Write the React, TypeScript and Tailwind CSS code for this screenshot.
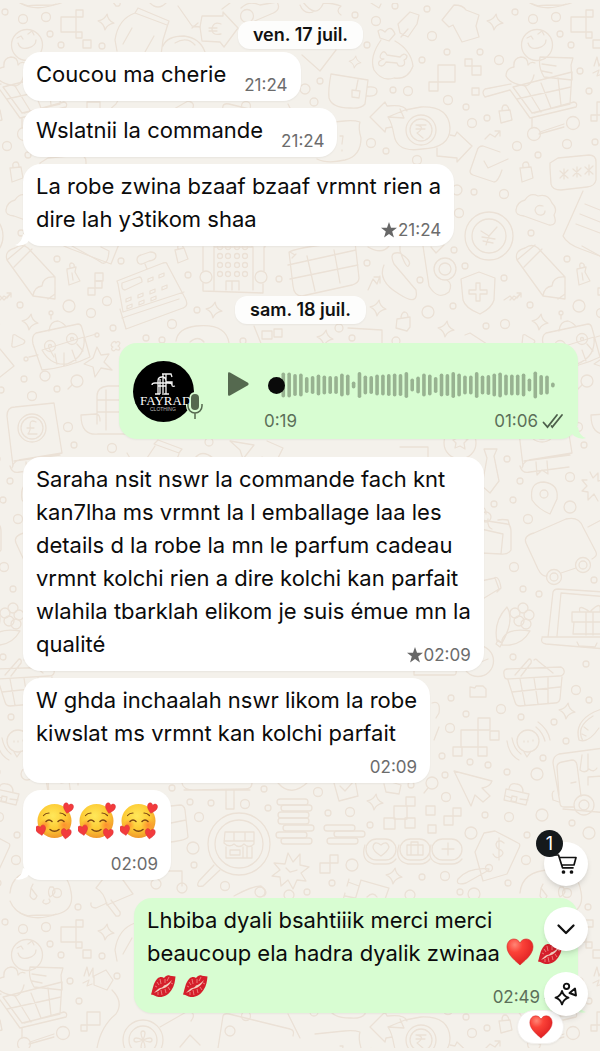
import type { ReactNode } from "react"

type Point = [number, number, number]

// x, y, radius
const dots: Point[] = [
  [5, 12, 3], [23, 19, 4.5], [46, 17, 4.5], [50, 34, 3], [61, 45, 3], [102, 46, 3], [7, 146, 4.5], [28, 155, 3],
  [57, 144, 4.5], [85, 142, 3], [70, 71, 3], [79, 91, 3], [117, 66, 3], [21, 233, 3],
  [355, 15, 3], [376, 21, 4.5], [395, 6, 3], [427, 9, 3], [432, 36, 4.5], [367, 45, 3], [422, 60, 3], [447, 52, 3],
  [480, 52, 3], [499, 60, 4.5], [320, 81, 3], [305, 89, 5], [314, 102, 4], [393, 90, 3], [408, 91, 4.5],
  [448, 100, 4.5], [466, 107, 3], [472, 123, 4.5], [487, 118, 3], [371, 143, 4.5], [386, 151, 3], [417, 160, 4.5],
  [457, 190, 5], [474, 192, 3], [504, 194, 4.5], [459, 213, 4.5], [454, 250, 3], [246, 106, 4.5],
  [57, 259, 3], [121, 261, 3], [188, 275, 3], [279, 279, 3], [69, 306, 6], [91, 313, 4.5], [107, 301, 4.5],
  [20, 305, 3], [197, 310, 3], [172, 324, 4.5], [113, 328, 3], [146, 338, 3], [162, 340, 3], [243, 341, 3],
  [24, 379, 3], [57, 389, 3], [32, 396, 4.5], [1, 390, 3], [68, 427, 4.5], [74, 445, 3], [112, 448, 4.5],
  [209, 442, 4], [45, 376, 5], [367, 263, 3], [420, 280, 3], [465, 266, 3], [504, 278, 3], [453, 306, 3],
  [428, 312, 6], [486, 326, 3], [505, 324, 4.5], [352, 338, 3], [339, 328, 4], [396, 341, 4],
  [507, 459, 3], [10, 481, 3], [3, 500, 3], [60, 507, 6], [18, 519, 4.5], [494, 504, 3], [4, 567, 4.5],
  [13, 589, 3], [29, 594, 3], [60, 477, 4.5], [84, 580, 3], [76, 664, 3], [3, 657, 3], [66, 690, 4.5],
  [79, 700, 3], [44, 722, 3], [56, 741, 3], [11, 717, 3], [501, 709, 4.5], [466, 714, 3], [451, 698, 3],
  [450, 728, 4.5], [442, 756, 3], [470, 762, 3], [488, 765, 3], [507, 772, 3], [33, 758, 3], [27, 774, 6],
  [446, 797, 4.5], [445, 775, 3], [485, 815, 3], [509, 817, 4.5], [32, 815, 6], [62, 823, 3], [79, 833, 6],
  [471, 833, 6], [411, 785, 3], [264, 789, 3], [318, 792, 4.5], [190, 802, 3], [211, 803, 3], [245, 804, 4.5],
  [268, 808, 3], [199, 817, 4.5], [193, 848, 6], [194, 865, 3], [225, 886, 4.5], [182, 888, 5], [172, 788, 3],
  [328, 813, 3], [350, 812, 4.5], [370, 825, 3], [352, 865, 6], [332, 883, 3], [422, 877, 3], [445, 876, 4.5],
  [460, 892, 3], [307, 892, 3], [17, 835, 3], [16, 860, 4.5], [78, 907, 3], [156, 884, 5], [508, 883, 3],
  [474, 894, 6], [289, 895, 5], [410, 895, 5], [57, 893, 4.5],
]

const sparkles: Point[] = [
  [106, 22, 8], [495, 22, 8], [355, 62, 6], [30, 322, 8], [214, 310, 8], [378, 308, 8], [446, 329, 8],
  [325, 338, 8], [57, 711, 8], [375, 802, 8], [394, 876, 8],
]

// x, y, size
const squares: Point[] = [
  [76, 10, 7], [61, 17, 15], [76, 32, 6], [83, 40, 8], [438, 65, 17], [429, 82, 9], [465, 59, 7], [472, 66, 9],
  [472, 88, 7], [95, 273, 8], [95, 281, 7], [88, 288, 7], [87, 102, 13], [81, 115, 6],
  [461, 730, 17], [478, 718, 12], [490, 731, 9], [453, 747, 9], [478, 747, 9], [406, 797, 9], [394, 806, 13],
  [384, 818, 11], [405, 818, 10], [426, 806, 9], [453, 808, 8], [444, 816, 9], [428, 825, 8],
  [330, 855, 8], [320, 863, 10],
]

function Doodles() {
  return (
    <g id="doodles" fill="none" stroke="#ebe1d6" strokeWidth="1.3" strokeLinecap="round" strokeLinejoin="round">
      {dots.map(([x, y, r], i) => (
        <circle key={i} cx={x} cy={y} r={r} />
      ))}
      {sparkles.map(([x, y, r], i) => (
        <path
          key={i}
          transform={`translate(${x} ${y}) rotate(8) scale(${r / 8})`}
          d="M0-8Q1.500-2 8 0Q2 1.500 0 8Q-1.500 2-8 0Q-2-1.500 0-8Z"
        />
      ))}
      {squares.map(([x, y, s], i) => (
        <rect key={i} x={x} y={y} width={s} height={s} />
      ))}

      {/* smiley, heart and note riding in the trolley */}
      <circle cx="27" cy="45" r="15.500" />
      <path d="M18 43q2 7 10 5t8-8M17 38l4-2 2 3M28 34l4-3 2 4M24 75q-2 9-8 11-16-2-20-10 0-8 8-9-1-9 7-10 7 0 7 8q3-4 7-2M30 57l33 1-2 7 1 15-28-3q-6-10-4-20zM32 64l14 2M32 71l10 2" />
      <path d="M3 87l59-15-2 32-38 9zM7 99l54-12M15 86l16 26M31 83l10 25M48 78l3 27M0 90l20 28 46-11q2-4-2-5L24 113M0 90l-25 7q-4-5 0-8l26-5M22 118v10M30 132l24-8M29 134l25-7" />
      <circle cx="24" cy="134" r="6.500" />
      <circle cx="63" cy="123" r="6.500" />
      <path d="M20 3q16 9 36 1M150 3q8 8 16 0M230 3l-8 6M178 6l14 20 8 1M192 28l6-5" />
      <path d="M117 51l-2-11q3-21 20-27l3-5 31 13-2 6-4 13-2 15M135 13l32 12M132 28l-9 16M154 36l-9 16M163 46q4-10 21-10 16 2 21 16M175 43q12-7 20 2" />
      <path d="M202 16l21 0 0-4 15 16-14 19-4-5-18-1-2-14zM221 24q-8-3-9 5 0 7 9 5M209 28h8M209 31h8" />
      <circle cx="247" cy="16" r="6.500" />
      <path d="M241 8q8-8 19-3l17-3q5 8-6 12l-21 9" />
      <path d="M300 5q4 10 13 7M303 2q13 17 20 2M323 3q10 0 18 3-6 5 0 9M371 3l8 5 2-4M410 12l9 3-2 9-9 13-8-4-2-9zM408 29l-7 8" />
      <path d="M378 31q3-3 7 1 6-8 10 2l-6 7-9-3zM381 40q-12 17-7 30 8 12 20 8 14 2 19-12-2-16-18-25" />
      <path d="M384 59q-6 0-3-5 3-5 6 1l13 2q4-5 7-1 0 3-3 4 2 5-2 6-4 1-5-3l-11-1q-3 6-7 3-2-4 5-6z" />
      <path d="M442 20l12-15q9 0 12 5l13 5-3 11 3 11-17 5-9-17-4 2z" />
      <path d="M331 74l37 6-3 24q-4 5-15 4-18 0-21-10-1-8 2-24zM368 87q9-1 9 4 0 6-10 5M358 80l-2 10M352 90l8 1-1 7-7-1zM302 55l18 16 16-21" />
      <path d="M370 117l15-15 2 4q18-2 20 5M370 117l15 15 1-4 6-1M388 117l16 1 -4-9M388 117q4 6 6 18 3 18 28 14 28-1 28-21-1-22-29-21l-16 3-17 7" />
      <circle cx="421" cy="130" r="15" />
      <circle cx="421" cy="130" r="11" />
      <path d="M416 125h10M416 129h9M417 125q9 2 0 8l6 5M437 148v8l20 2v4l15-16-15-14-2 4-5-1M485 139l5-5 5 3 5-6M495 131h5v5" />
      <path d="M499 111l11-1 2 10-11 3zM502 110q0-5 3-5t4 5M520 168l11-1 2 11-11 4zM523 167q-1-5 3-5 3 0 3 5" />
      <path d="M500 152l-17-6q-5 0-6 5l-7 20q0 3 3 4l21 7q4 0 8-12M484 161l4 7 20-9M315 124l29-3q10-1 16 1-2 6 1 16 0 18-16 22-18 4-28-1M340 136l3 0-1 8M342 150v1" />
      <path d="M40 168l0-5 8-5 31-3q7 0 7 7l0 18q-1 6-9 7l-26 3q-9 0-10-6zM50 171l8 7M58 170l-8 8M54 169v10M63 169l8 7M71 168l-8 8M67 167v10M75 167l8 7M83 166l-8 8M79 165v10" />
      <path d="M6 210q1-8 9-10 5-8 13-4 10-3 14 7 6 6 2 12 4 11-5 10l-25-9q-9-1-8-6zM33 206q-7-2-8 4 1 6 7 5 3-1 3-4" />
      <circle cx="489" cy="236" r="24" />
      <circle cx="489" cy="236" r="17" />
      <path d="M481 231l8 5 8-9M489 236l-3 9M482 237l13 2M483 241l10 2" />
      <path d="M73 191l-20 45q4 8 18 13l40 15 20-50M75 204l30 12M70 214l30 12M66 224l32 12" />

      {/* pencil */}
      <path d="M7 260q-3-9 8-12 7-5 13 0l27 29 0 22-22-3zM14 267l18-18M7 260l18-15M33 296q1-9 9-10 1-10 13-9M48 299l7-5" />
      <path d="M67 269l9-2-1 5 5 9-11 4-2-14zM70 267q-1-4 2-4 3 1 2 4M72 273l1 7M0 300l4-4 3 2 4-5M7 293h4v4" />
      <path d="M72 246l18 10q8 4 12 7 6 2 7-12l-8-4M175 250l9-2 4 11-10 4zM178 249q-1-4 2-5 3 0 3 3" />
      <path d="M118 284l-1-3 46-18q4-1 4 1l17 32q6 10-1 12l-57 21-6-20M118 284l5 28 61-20M122 318l57-19M122 283l17-6q3 0 3 5l-17 8q-4 0-3-7zM137 260q0-4 4-5l9-3q6 0 6 4 0 4-7 5l-7 3q-4 1-5-4M145 264l2 5" />
      <path d="M126 299l5-2v3l-5 2zM138 295l5-2v3l-5 2zM150 291l5-2v3l-5 2zM148 279l5-2v3l-5 2zM159 275l5-2v3l-5 2zM127 306l5-2v3l-5 2zM139 302l5-2v3l-5 2zM151 298l5-2v3l-5 2zM162 287l5-2v3l-5 2z" />
      <circle cx="206" cy="277" r="6" />
      <circle cx="261" cy="277" r="6" />
      <path d="M202 242h12v5h38v-5h13v5M203 247v24M203 283v8l60 2v-9M214 247v43M253 247v43M264 247v24M226 290v-9h13v9M232 281v9" />
      {[220, 228, 237, 245].map((x) => (
        <g key={x}>
          <circle cx={x} cy="247" r="2.500" />
          <circle cx={x} cy="256" r="2.500" />
          <circle cx={x} cy="265" r="2.500" />
          <circle cx={x} cy="274" r="2.500" />
        </g>
      ))}
      <path d="M289 252q12-6 66-10l4 36q0 5-7 7l-50 11q-8 0-9-10zM288 265l68-15M290 279l68-14M307 256l8 35M334 250l6 33M295 255l-5-3M292 258l4-4" />
      <path d="M368 247q14 8 21-1M384 265q-7 16 15 29 20 13 17-4l-22-26q-6-13 6-11 12 8 9 12-2 6-9-14v-8M423 246l6 40q9 15 20 6 4-8-2-12M431 247l5 6 8-8" />
      <circle cx="445" cy="269" r="11" />
      <circle cx="445" cy="269" r="6" />
      <path d="M368 290l5-11 4 5 3-8M374 277h6v6M461 279l18-7 16 6-1 22q-2 8-14 14-15-6-17-14zM476 283h4v7h7v4h-7v7h-4v-7h-7v-4h7zM504 300l6-4 4 4 6-6M397 319l13-2 0 10-3 4-11-3zM401 317q1-5 4-5 3 1 3 5" />

      {/* robot */}
      <path d="M36 333l42-9q3 0 4 4l8 29q-20 10-48 13l-9-26q-2-8 3-11zM49 331q1-10 9-10 6 2 8 6M51 319v-4M86 337l10-3M29 357l9-2M42 350l42-13q2 20-17 27-16 2-25-14zM49 348l5 9M55 354l2 10M64 353v13M72 350l4 11M77 344l6 7" />
      <circle cx="51" cy="313" r="2" />
      <circle cx="97" cy="335" r="2" />
      <circle cx="26" cy="359" r="2" />
      <circle cx="50" cy="346" r="5.500" />
      <circle cx="50" cy="346" r="1.500" />
      <circle cx="72" cy="339" r="5.500" />
      <circle cx="72" cy="339" r="1.500" />
      <path d="M97 347l4 8 8-1-5 8 8 8-11-2-6 9-2-10-9-3 9-6zM13 335q2-1 4 1l7 4q2 2-1 4l-8 3q-4 1-3-3zM112 343q3-3 4 0 2-3 4 0-1 3-2 3 3 2 1 4-3 0-3-1-2 3-4 1-1-2 1-3-3-1-1-4zM0 349l14 17-14 11" />
      <circle cx="77" cy="381" r="6" />
      <path d="M72 385l-4 4M98 434q-17 2-17-19l15-1q4 0 4 7M97 396q0-9 11-10h20M97 396v28M106 390v40M98 434h30M97 400h22M97 412h22M176 341q2-13 20-15 30-3 33 17M190 342q8-7 14 0M254 326l8 20 120 0v-16l-34-2M262 331h10v8h-10zM274 329h8v8h-8z" />
      <path d="M7 416q0-9 8-9l39-4 8 50-43 7q-6 2-7 8M7 416l6 50M14 461l46-6" />
      <circle cx="32" cy="428" r="14" />
      <circle cx="32" cy="428" r="11" />
      <path d="M36 422q-6-3-6 3 1 5-2 9h9M27 428h7" />
      <path d="M158 440l24 9-3 4-25-9zM155 446l-8 12M179 454l-5 12M230 441l24 4-11 14-3-9zM127 453l4 7M267 441l16 7-7 14-14-5M195 458q7-9 18 0M465 335l5-2 20 13" />

      {/* book, bus, laptop, basket, food */}
      <circle cx="460" cy="443" r="16" />
      <path d="M453 440l5-2 2-5 3 5 5 1-4 4 1 6-5-3-5 2 1-5zM400 447h28v10M484 449h13l-3 7 5 25-9 12-8-7 5-28zM520 466q2 8 10 6l39-5M536 462l1 13 5-5 6 4-1-13" />
      <circle cx="544" cy="494" r="4" />
      <path d="M532 500q-3-18 12-18 15 2 13 17l-7 15q-12-5-18-14M590 472l3 6 5-5v8l7-2M587 480l-5 0 5 6-5 5 6 1 0 8 6-6 4 7" />
      <path d="M526 543q-3-7 8-10l32-14q13-3 17 8l13 25q2 4-4 7M526 543l12 26q4 8 9 7M561 573l15-5M588 527l15-8" />
      <circle cx="554" cy="577" r="7.500" />
      <circle cx="554" cy="577" r="4" />
      <circle cx="583" cy="565" r="7.500" />
      <circle cx="583" cy="565" r="4" />
      <path d="M481 520l26 4q4 0 4 8l0 18q-3 5-11 4M481 529l22 5-2 20-20-1M498 520q4-1 10 0l3 10M486 514q0-7-4-6M488 519q-1 8 4 10M481 581l14-3 4 11-18 11M494 578q5-3 7 10l-4 4" />
      <circle cx="486" cy="517" r="5" />
      <path d="M497 641q-4-19 10-34 8 13-5 36zM502 640q5-13 28-9-9 16-28 14zM498 640l4 3-2 4-4-3z" />
      <circle cx="515" cy="613" r="5" />
      <circle cx="523" cy="608" r="5" />
      <circle cx="529" cy="615" r="5" />
      <circle cx="519" cy="621" r="5" />
      <circle cx="526" cy="624" r="5" />
      <path d="M548 637l5-45q1-3 5-3l62 4M557 636l4-43 60 5M542 637h60M542 638q-2 5 4 6l60 5M577 642l2 4 16 1 2-4M572 612h40v10h-40zM574 622l-1 12h40M586 612v23M593 612v23M590 612q-13-9-10 0M590 612q12-13 10 0" />
      <path d="M504 674q-1-4 3-5l54-2q4 2 3 6-1 3-5 3l-52 3q-3 0-3-5zM508 680l7 22q1 4 5 4l35-3q4 0 5-4l2-22M512 692l48-5M520 679l5 26M534 678l4 26M548 677l0 26M515 675l14-16q3 0 2 4l-10 13M534 660q2-2 4 1l15 12" />
      <circle cx="478" cy="661" r="15.500" />
      <path d="M470 660l6 4 12-5M406 670h8v5h40q3 0 2-6M470 687l5 1 1-2 7 0 3 3v8l-16 0z" />
      <circle cx="528" cy="741" r="11" />
      <path d="M524 752l3 5 4-6M507 741q2 14 12 19M512 738q2 11 9 16M538 722q10 7 12 18M536 727q7 6 9 14M524 741v1M528 741v1M533 740v1" />
      <path d="M579 740q-5-18 15-28l20-8M579 740q9 4 20-12M583 741q-8-14 10-25M584 727l4 3M582 734l4 2" />
      <path d="M560 803l-7-40q0-7 6-9l60-8M563 809l57 5M560 803q0 4 4 4h10M554 791q-3 1-1 9l6 2M559 795l-2-28q0-4 5-5l10-2q4 0 5 5l4 31M571 783l5-1M582 755l-2 15q5 4 9-1 5 4 8-1M588 754v15M588 785l0-8 15-1" />
      <circle cx="584" cy="805" r="10" />
      <circle cx="584" cy="805" r="5" />
      <path d="M454 771l38 10q-2 6-10 7l8 8-7 6-8-7-4 11zM506 789l23 5-3 11-22-5zM509 789q1-7 8-5 6 1 6 8M506 796l6 2M520 799l8 1M512 796l5 1-1 5-5-1z" />
      <circle cx="432" cy="783" r="6" />
      <path d="M428 788l-4 5M432 703q9-3 7 10l-3 5M434 740l5-13M182 783q1 7 12 7l51-1q7 0 7-6M184 790h66M226 790v19h8v-19M278 783q13 15 30-1M334 783l5 18 19-5-3-16M340 786l5 5 8-9M384 784l2 8 13 2 2-9-10-3" />
      <path d="M171 806l9-1q4 0 5 5l3 27q-1 3-17 5M171 823l15-3" />

      {/* magnified shop front */}
      <circle cx="239" cy="844" r="31" />
      <circle cx="239" cy="844" r="24" />
      <path d="M214 865l-15 16q-4 7 4 5l17-16M225 832h29v12q-5 5-10 0-5 5-10 0-5 4-10-1zM234 832v9M245 832v9M224 841h30M226 847v11h26v-11M230 850h10v5h-10zM243 847v11M247 847v11" />
      {[[277, 799], [281, 805], [278, 812], [278, 818], [283, 825], [276, 832], [281, 838], [324, 825], [334, 831], [327, 838]].map(
        ([x, y]) => (
          <rect key={`${x}-${y}`} x={x} y={y} width="31" height="6" rx="3" />
        )
      )}
      <path d="M288 853l5 9 7-8 0 11 9 2-8 6 5 8-9-1-4 9-5-9-7 6-1-9-8-1 8-6-6-7 11 1zM286 868l4 4 7-2" />
      {[382, 416, 448].map((x) => (
        <g key={x}>
          <rect x={x - 16} y="839" width="30" height="21" rx="10.500" />
          <path d={`M${x - 17} 845q-5 16 9 19h12q6 0 10-5`} />
        </g>
      ))}
      <path d="M381 856q-8-5-8-9 1-7 8-2 6-5 8 2-1 4-8 9M407 845h16v10h-16zM411 845v-3h7v3M411 845v10M418 845v10M448 843v12M442 849h12" />
      <path d="M361 880l28 8-5 14M361 880l-6 20M349 879l-2 7M348 882l11 4M345 893l-2 7M345 896l10 2M367 897q6-6 10 0M234 896q18-10 27-10 8 6 3 10" />
      <circle cx="260" cy="892" r="5" />
      <path d="M484 833l11-2 23 12q3 1 1 5l-12 26-24 7-8-29zM504 843q-6-5-8 1 0 5 5 6 4 3 0 6-5 4-8-2M499 838v22M489 869q-20-2-31 10-3 7 8 4l23-13" />
      <circle cx="489" cy="868" r="3.500" />

      {/* headset and megaphone */}
      <path d="M10 893q2-22 30-23 27-4 31 22 4 20-18 23-20 0-25 1-13-3-18-15M31 888q4-8 0 0l-1 8q4 7 7 0zM50 887q-3 5 0 10 8-4 3-10zM44 900q-3 3 2 4 6-1 3-5M91 903q-1 5 5 5l11-5M96 888q8 4 11 17l26-11-20-28zM106 903l10 13q5 1 4-4l-9-12M160 871h22v15" />

      {/* plug and fan */}
      <path d="M84 66l3-9 2 9 4-8 0 9M83 73l6-3-2 6 5-2M94 66l12-6 7 10-6 10-13-5zM112 80q12 12 4 24-15 12-19 34" />
      <circle cx="143" cy="130" r="20" />
      <circle cx="143" cy="130" r="14" />
      <path d="M143 130q-4-9 0-9t0 9q9-4 9 0t-9 0q4 9 0 9t0-9q-9 4-9 0t9 0M160 117l28-16q9 2 3 10M218 138l5-32q1-3 6-2l61 15q5 1 3 7M180 137l10-12 10 10M288 104l12 24" />
      <circle cx="230" cy="121" r="5" />
    </g>
  )
}

function Wallpaper() {
  return (
    <svg className="absolute inset-x-0 top-[3px] bottom-[3px] -z-10 h-[calc(100%-6px)] w-full" aria-hidden="true">
      <defs>
        <Doodles />
        <pattern id="wallpaper" x="0" y="-3" width="510" height="910" patternUnits="userSpaceOnUse">
          <use href="#doodles" />
          <use href="#doodles" x="-510" />
          <use href="#doodles" x="510" />
          <use href="#doodles" y="-910" />
        </pattern>
      </defs>
      <rect width="100%" height="100%" fill="url(#wallpaper)" />
    </svg>
  )
}

function HeartEmoji({ className }: { className: string }) {
  return (
    <svg viewBox="0 0 28 28" className={className} role="img" aria-label="❤️">
      <defs>
        <radialGradient id="heart" cx="0.3" cy="0.22" r="0.85">
          <stop offset="0" stopColor="#ff8676" />
          <stop offset="0.35" stopColor="#fb4238" />
          <stop offset="1" stopColor="#dc1c20" />
        </radialGradient>
      </defs>
      <path
        d="M14 27C11 24 1 17 1 9 1 4 4 1 8 1c3 0 5 2 6 4 1-2 3-4 6-4 4 0 7 3 7 8 0 8-10 15-13 18Z"
        fill="url(#heart)"
        stroke="#d5282a"
        strokeWidth="0.6"
      />
    </svg>
  )
}

function KissEmoji() {
  return (
    <svg viewBox="0 0 26 26" className="mx-[3px] inline-block size-[26px] align-[-5px]" role="img" aria-label="💋">
      <path
        d="M1 21.500C3 16 3 10 7.500 5.500c2-2 5-2 6.500-.5C16 2.500 18 1.800 20 2.800l5.500.7c-.5 5-1 9-4 13.500-3 5-8 7.500-13 7-3-.5-4-2-7.500-2.500Z"
        fill="#d51f2b"
      />
      <path d="M4 19.500c2-1 4-4 6-4.500 2 0 3-1 4-2.500 3-1 5-2.500 8-5.500-2 4-4 6-6.500 7.500-2 1.200-3.500.5-5.500 2-2 1.700-3.500 2.700-6 3Z" fill="#f3cfc0" />
      <path
        d="M7 9l2 3M10 6l1 5M15 6l0 4M19 4l-2 4M5 13l2 1M8 19l0 3M11 17l1 5M15 16l1 4M18 14l2 3M21 10l2 1"
        stroke="#f4a09a"
        strokeWidth="0.7"
      />
    </svg>
  )
}

function LoveFaceEmoji() {
  const heart = "M0 5C-2 3-5 1-5-2c0-4 4-4 5-1 1-3 5-3 5 1 0 3-3 5-5 7Z"
  return (
    <svg viewBox="0 0 38 38" className="size-[38px]" role="img" aria-label="🥰">
      <defs>
        <radialGradient id="face" cx="0.45" cy="0.35" r="0.65">
          <stop offset="0" stopColor="#ffe85a" />
          <stop offset="0.6" stopColor="#fdcb35" />
          <stop offset="1" stopColor="#f0982a" />
        </radialGradient>
        <radialGradient id="blush">
          <stop offset="0" stopColor="#ff7a2e" stopOpacity="0.75" />
          <stop offset="1" stopColor="#ff8a2e" stopOpacity="0" />
        </radialGradient>
      </defs>
      <circle cx="18.500" cy="19" r="17" fill="url(#face)" />
      <circle cx="9" cy="23" r="6" fill="url(#blush)" />
      <circle cx="28" cy="23" r="7" fill="url(#blush)" />
      <g fill="none" stroke="#7a4512" strokeLinecap="round" strokeWidth="1.500">
        <path d="M10 19.500q3-3 6 0M22 19.500q3-3 6 0M14 27.500q4.500 3.500 9 0" />
        <path d="M7.500 13.500q2-2.500 5.500-2.500M24 11q3 0 5.500 2.500" strokeWidth="1.200" />
      </g>
      <g fill="#f23b3d" stroke="#d32a33" strokeWidth="0.4">
        <path d={heart} transform="translate(32 6.500) rotate(14)" />
        <path d={heart} transform="translate(5 28.500) rotate(-12)" />
        <path d={heart} transform="translate(30 32) rotate(8)" />
      </g>
    </svg>
  )
}

function Star() {
  return (
    <svg viewBox="0 0 24 24" className="size-4 fill-[#676767]" role="img" aria-label="Important">
      <path d="M12 0l3 8.500 9 .3-7.200 5.600 2.600 9L12 18l-7.400 5.400 2.600-9L0 8.800l9-.3z" />
    </svg>
  )
}

function Checks() {
  return (
    <svg viewBox="0 0 22 16" className="h-4 w-[22px]" fill="none" stroke="#4d5f4b" strokeWidth="1.800" strokeLinecap="round" role="img" aria-label="Distribué">
      <path d="M1.500 9.500l4 4.500L15 2M9.500 13l.8 1L20 2" />
    </svg>
  )
}

function Tail({ sent }: { sent?: boolean }) {
  return sent ? (
    <svg viewBox="0 0 16 12" className="absolute -right-2 bottom-0 h-3 w-4 fill-[#d8fdd2]" aria-hidden="true">
      <path d="M8 0q1 9 8 11-5 2-12-2L0 4z" />
    </svg>
  ) : (
    <svg viewBox="0 0 16 12" className="absolute bottom-0 -left-2 h-3 w-4 fill-white" aria-hidden="true">
      <path d="M8 0q-1 9-8 11 5 2 12-2l4-5z" />
    </svg>
  )
}

function Time({ children, starred }: { children: string; starred?: boolean }) {
  return (
    <span className="-mb-1 flex items-center justify-end gap-px text-[17px] leading-5 text-[#6c6c6c]">
      {starred && <Star />}
      <time>{children}</time>
    </span>
  )
}

function DateChip({ children }: { children: string }) {
  return (
    <div className="self-center rounded-xl bg-[#fdfdfc] px-[15px] text-lg leading-7 font-semibold text-[#111] shadow-xs">
      {children}
    </div>
  )
}

type MessageProps = {
  children: ReactNode
  time: string
  starred?: boolean
  tail?: boolean
  layout?: "inline" | "overlay" | "below"
}

const layouts = {
  inline: "flex items-end gap-[18px]",
  overlay: "grid items-end *:[grid-area:1/1]",
  below: "flex flex-col gap-[7px]",
}

function Message({ children, time, starred, tail, layout = "inline" }: MessageProps) {
  return (
    <article className="relative max-w-full self-start rounded-[18px] bg-white px-[13px] pt-1.5 pb-2.5 shadow-xs">
      {tail && <Tail />}
      <div className={layouts[layout]}>
        <div>{children}</div>
        <Time starred={starred}>{time}</Time>
      </div>
    </article>
  )
}

const bars = [
  25, 25, 22, 23, 16, 18, 21, 19, 18, 18, 23, 21, 7, 26, 19, 18, 21, 21, 22, 23, 22, 26, 13, 17, 23, 21, 16, 23, 22, 26,
  23, 19, 19, 26, 19, 20, 23, 25, 21, 21, 21, 23, 13, 27, 20, 19, 5,
]

function Avatar() {
  return (
    <div className="relative size-[61px] shrink-0">
      <svg viewBox="0 0 61 61" className="size-[61px]" role="img" aria-label="Fayrad Clothing">
        <circle cx="30.500" cy="30.500" r="30.500" fill="#000" />
        <g fill="none" stroke="#f4f4f4" strokeWidth="1.300">
          <path d="M25 33V20q0-4 4-4t4 4v13M30 34V13M33 33V13M29 13h9l1 3M33 21h6v3M19 24q0-2 3-2h13q4 0 4 2t3 1M27 33V18M22 33h5M31 33h5M25 25h8" />
        </g>
        <text x="7" y="44" fill="#fff" fontSize="13" fontFamily="Liberation Serif, serif">FAYRAD</text>
        <text x="17" y="50" fill="#bbb" fontSize="5" fontFamily="Liberation Sans, sans-serif">CLOTHING</text>
      </svg>
      <svg viewBox="0 0 20 30" className="absolute -right-3 bottom-0 h-[30px] w-5" aria-hidden="true">
        <rect x="3.500" y="0" width="11" height="21" rx="5.500" fill="#d8fdd2" />
        <path d="M2 12v2a7 7 0 0 0 14 0v-2M9 21v6" stroke="#d8fdd2" strokeWidth="4" fill="none" />
        <rect x="5" y="2" width="8" height="16" rx="4" fill="#55694f" />
        <path d="M2 12v2a7 7 0 0 0 14 0v-2M9 21v6" stroke="#55694f" strokeWidth="1.500" fill="none" />
      </svg>
    </div>
  )
}

function VoiceMessage() {
  return (
    <article className="relative flex h-24 w-[459px] max-w-full items-center self-end rounded-[18px] bg-[#d8fdd2] px-[14px] shadow-xs">
      <Tail sent />
      <Avatar />
      <button type="button" aria-label="Lire" className="mb-[14px] ml-8">
        <svg viewBox="0 0 24 26" className="h-[26px] w-6 fill-[#55694f]" aria-hidden="true">
          <path d="M2 2.500q0-2 2-1l18 10.200q1.500 1.300 0 2.600L4 24.500q-2 1-2-1z" />
        </svg>
      </button>
      <div className="mt-5 ml-[14px] min-w-0 flex-1">
        <div className="relative mr-2 ml-1">
          <svg viewBox="0 0 288 28" preserveAspectRatio="none" className="h-7 w-full" aria-hidden="true">
            {bars.map((h, i) => (
              <rect key={i} x={13.500 + i * 5.860} y={14 - h / 2} width="3.600" height={h} rx="1.800" fill="#98b291" />
            ))}
          </svg>
          <input
            type="range"
            aria-label="Position"
            defaultValue={0}
            className="absolute inset-0 h-7 w-full appearance-none bg-transparent [&::-webkit-slider-thumb]:size-[17px] [&::-webkit-slider-thumb]:appearance-none [&::-webkit-slider-thumb]:rounded-full [&::-webkit-slider-thumb]:bg-[#0a0a0a]"
          />
        </div>
        <div className="mt-3 flex justify-between text-[17px] leading-5 text-[#5c6f59]">
          <span>0:19</span>
          <span className="flex items-center gap-1">
            <time>01:06</time>
            <Checks />
          </span>
        </div>
      </div>
    </article>
  )
}

const floating = "relative flex size-11 items-center justify-center rounded-full bg-white text-[#111] shadow-md"

function FloatingActions() {
  return (
    <nav className="absolute right-3 bottom-[35px] flex flex-col gap-[21px]" aria-label="Actions">
      <button type="button" aria-label="Panier" className={floating}>
        <svg viewBox="0 0 24 24" className="size-6" fill="none" stroke="currentColor" strokeWidth="1.700" strokeLinecap="round" strokeLinejoin="round" aria-hidden="true">
          <path d="M1.500 3h3l4 12.800h10.500M5.500 5.500h16.500l-2 7.500H7.800" />
          <circle cx="9.500" cy="20" r="1" fill="currentColor" />
          <circle cx="17.500" cy="20" r="1" fill="currentColor" />
        </svg>
        <span className="absolute -top-3 -left-2 flex size-[27px] items-center justify-center rounded-full bg-[#15191b] text-lg text-white">
          1
        </span>
      </button>
      <button type="button" aria-label="Descendre" className={floating}>
        <svg viewBox="0 0 24 24" className="size-6" fill="none" stroke="currentColor" strokeWidth="2.300" strokeLinecap="round" strokeLinejoin="round" aria-hidden="true">
          <path d="M4.500 8.500l7.500 7.500 7.500-7.500" />
        </svg>
      </button>
      <button type="button" aria-label="Suggestions" className={floating}>
        <svg viewBox="0 0 24 24" className="size-6" fill="none" stroke="currentColor" strokeWidth="1.900" strokeLinejoin="round" aria-hidden="true">
          <path d="M8 9q1.500 5.200 6.500 6.700-5 1.500-6.500 6.700-1.500-5.200-6.500-6.700Q6.500 14.200 8 9Z" />
          <circle cx="12.500" cy="4.300" r="2.700" />
          <path d="M21 6.500l1 7-6.500-2.500z" />
        </svg>
      </button>
    </nav>
  )
}

export default function App() {
  return (
    <main className="relative isolate flex min-h-screen flex-col gap-[7px] overflow-hidden bg-[#f4f1eb] pt-[21px] pr-[22px] pb-[38px] pl-[23px] font-['Inter',sans-serif] text-[22px] leading-[33px] text-[#0b0b0b]">
      <Wallpaper />

      <DateChip>ven. 17 juil.</DateChip>
      <div className="-mt-1 flex flex-col gap-[7px]">
        <Message time="21:24">Coucou ma cherie</Message>
        <Message time="21:24">Wslatnii la commande</Message>
        <Message time="21:24" layout="overlay" starred tail>
          La robe zwina bzaaf bzaaf vrmnt rien a
          <br />
          dire lah y3tikom shaa
        </Message>
      </div>

      <div className="mt-[43px] mb-3 flex flex-col">
        <DateChip>sam. 18 juil.</DateChip>
      </div>
      <VoiceMessage />

      <div className="mt-[11px] flex flex-col gap-[7px]">
        <Message time="02:09" layout="overlay" starred>
          Saraha nsit nswr la commande fach knt
          <br />
          kan7lha ms vrmnt la l emballage laa les
          <br />
          details d la robe la mn le parfum cadeau
          <br />
          vrmnt kolchi rien a dire kolchi kan parfait
          <br />
          wlahila tbarklah elikom je suis émue mn la
          <br />
          qualité
        </Message>
        <Message time="02:09" layout="below">
          W ghda inchaalah nswr likom la robe
          <br />
          kiwslat ms vrmnt kan kolchi parfait
        </Message>
        <Message time="02:09" layout="below" tail>
          <span className="mt-1.5 mb-[7px] flex gap-1">
            <LoveFaceEmoji />
            <LoveFaceEmoji />
            <LoveFaceEmoji />
          </span>
        </Message>
      </div>

      <article className="relative mt-[11px] grid w-[444px] max-w-full items-end self-end rounded-[18px] bg-[#d8fdd2] px-[13px] pt-1.5 pb-2.5 whitespace-nowrap shadow-xs *:[grid-area:1/1]">
        <p>
          Lhbiba dyali bsahtiiik merci merci
          <br />
          beaucoup ela hadra dyalik zwinaa <HeartEmoji className="inline-block size-7 align-[-5px]" />
          <KissEmoji />
          <br />
          <KissEmoji />
          <KissEmoji />
        </p>
        <span className="-mb-1 flex items-center gap-1 justify-self-end text-[17px] leading-5 text-[#5c6f59]">
          <time>02:49</time>
          <Checks />
        </span>
        <Tail sent />
        <span className="absolute right-[14px] -bottom-[31px] flex h-[34px] w-[47px] items-center justify-center rounded-full border border-[#f3f1ee] bg-white shadow-xs">
          <HeartEmoji className="size-6" />
        </span>
      </article>

      <FloatingActions />
    </main>
  )
}
